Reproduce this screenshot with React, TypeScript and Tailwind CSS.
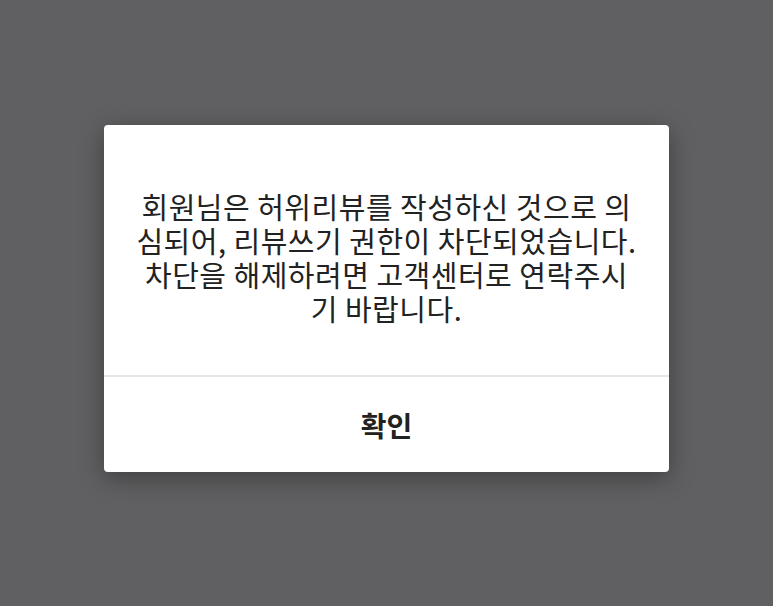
import React from 'react';

const lines = [
  '회원님은 허위리뷰를 작성하신 것으로 의',
  '심되어, 리뷰쓰기 권한이 차단되었습니다.',
  '차단을 해제하려면 고객센터로 연락주시',
  '기 바랍니다.',
];

export default function App() {
  return (
    <div
      className="w-[773px] h-[606px] bg-[#606062] flex items-start justify-center pt-[125px]"
      style={{ fontFamily: '"Noto Sans CJK KR", "Noto Sans", sans-serif' }}
    >
      <div className="w-[565px] bg-white rounded-[4px] shadow-[0_6px_24px_rgba(0,0,0,0.35)] overflow-hidden">
        <div className="pt-[64px] pb-[50px] px-[20px]">
          <p className="text-[29px] leading-[34px] tracking-[0.5px] text-[#222] text-center whitespace-nowrap">
            {lines.map((l, i) => (
              <span key={i} className="block">{l}</span>
            ))}
          </p>
        </div>
        <div className="h-[2px] bg-[#e6e6e6]" />
        <button className="w-full h-[95px] flex items-center justify-center text-[28px] font-bold text-[#222]">
          확인
        </button>
      </div>
    </div>
  );
}
